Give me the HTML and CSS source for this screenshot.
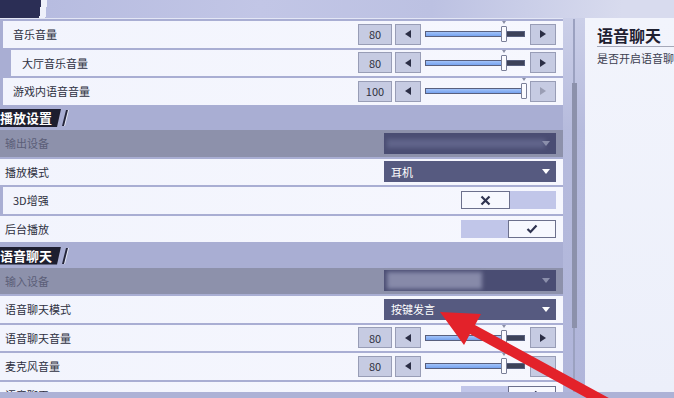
FILE: index.html
```html
<!DOCTYPE html>
<html lang="zh-CN">
<head>
    <meta charset="UTF-8">
    <title>声音设置</title>
    <link rel="stylesheet" href="styles.css">
</head>
<body>
    <div class="topbar"></div>
    <div class="main">
        <section class="settings">
            <div class="row in1">
                <span>音乐音量</span>
                <div class="slider">
                    <div class="num">80</div>
                    <span class="step prev"><i></i></span>
                    <div class="bar"><div class="fill" style="width:80%"></div><div class="knob" style="left:80%"></div></div>
                    <span class="step next"><i></i></span>
                </div>
            </div>
            <div class="row in2">
                <span>大厅音乐音量</span>
                <div class="slider">
                    <div class="num">80</div>
                    <span class="step prev"><i></i></span>
                    <div class="bar"><div class="fill" style="width:80%"></div><div class="knob" style="left:80%"></div></div>
                    <span class="step next"><i></i></span>
                </div>
            </div>
            <div class="row in1">
                <span>游戏内语音音量</span>
                <div class="slider">
                    <div class="num">100</div>
                    <span class="step prev"><i></i></span>
                    <div class="bar"><div class="fill" style="width:100%"></div><div class="knob" style="left:100%"></div></div>
                    <span class="step next dim"><i></i></span>
                </div>
            </div>

            <div class="head"><span class="tab">播放设置</span><span class="slash"></span></div>
            <div class="row off">
                <span>输出设备</span>
                <div class="select blur wide"><span class="mask"></span></div>
            </div>
            <div class="row">
                <span>播放模式</span>
                <div class="select">耳机</div>
            </div>
            <div class="row in1">
                <span>3D增强</span>
                <div class="toggle">
                    <span class="on"><svg width="11" height="11" viewBox="0 0 11 11"><path d="M1.5 1.5 L9.5 9.5 M9.5 1.5 L1.5 9.5" stroke="#2f3350" stroke-width="2.2"/></svg></span>
                    <span class="off"></span>
                </div>
            </div>
            <div class="row">
                <span>后台播放</span>
                <div class="toggle">
                    <span class="off"></span>
                    <span class="on"><svg width="12" height="10" viewBox="0 0 12 10"><path d="M1.5 5 L4.5 8 L10.5 1.5" stroke="#2f3350" stroke-width="2.2" fill="none"/></svg></span>
                </div>
            </div>

            <div class="head"><span class="tab">语音聊天</span><span class="slash"></span></div>
            <div class="row off">
                <span>输入设备</span>
                <div class="select blur"><span class="mask"></span></div>
            </div>
            <div class="row">
                <span>语音聊天模式</span>
                <div class="select">按键发言</div>
            </div>
            <div class="row">
                <span>语音聊天音量</span>
                <div class="slider">
                    <div class="num">80</div>
                    <span class="step prev"><i></i></span>
                    <div class="bar"><div class="fill" style="width:80%"></div><div class="knob" style="left:80%"></div></div>
                    <span class="step next"><i></i></span>
                </div>
            </div>
            <div class="row">
                <span>麦克风音量</span>
                <div class="slider">
                    <div class="num">80</div>
                    <span class="step prev"><i></i></span>
                    <div class="bar"><div class="fill" style="width:80%"></div><div class="knob" style="left:80%"></div></div>
                    <span class="step next"><i></i></span>
                </div>
            </div>
            <div class="row">
                <span>语音聊天</span>
                <div class="toggle">
                    <span class="off"></span>
                    <span class="on"><svg width="12" height="10" viewBox="0 0 12 10"><path d="M1.5 5 L4.5 8 L10.5 1.5" stroke="#2f3350" stroke-width="2.2" fill="none"/></svg></span>
                </div>
            </div>
        </section>

        <div class="gutter">
            <div class="track"><div class="thumb"></div></div>
        </div>

        <aside class="info">
            <h2>语音聊天</h2>
            <p>是否开启语音聊天</p>
        </aside>
    </div>
    <div class="bottombar"></div>

    <!-- 红色指示箭头 -->
    <svg class="pointer" width="674" height="398" viewBox="0 0 674 398">
        <polygon points="440,312 481,314 475,325 651,421 645,430 470,334 464,345" fill="#e3222a"/>
    </svg>
</body>
</html>
```

FILE: styles.css
```css
/* 基础 */
* {
    margin: 0;
    padding: 0;
    box-sizing: border-box;
}

body {
    width: 674px;
    height: 398px;
    overflow: hidden;
    position: relative;
    background: #aeb3d8;
    font-family: "Noto Sans CJK SC", "Noto Sans", sans-serif;
    color: #2e3040;
}

.topbar {
    height: 18px;
    background: linear-gradient(96deg, #2b2e55 0 41px, #eef0fa 41px 47px, #b7bce0 47px, #c2c6e6 260px, #bcc1e2 430px, #d8dbee 620px);
}

.main {
    display: flex;
    height: 374px;
}

.bottombar {
    height: 6px;
    background: #adb2d6;
}

/* 设置列表 */
.settings {
    width: 563px;
    background: #a9aed3;
    border-top: 1px solid #e3e6f5;
    padding-top: 2px;
    display: flex;
    flex-direction: column;
    gap: 2px;
    overflow: hidden;
}

.row {
    flex-shrink: 0;
    height: 26.5px;
    display: flex;
    align-items: center;
    justify-content: space-between;
    background: linear-gradient(90deg, #f2f4fd, #f6f7fe);
    padding: 0 7px 0 5px;
    font-size: 11px;
    white-space: nowrap;
}

.row.in1 {
    margin-left: 3px;
    padding-left: 10px;
}

.row.in2 {
    margin-left: 11px;
    padding-left: 11px;
}

.row.off {
    background: #8d91ab;
    color: #5b5e78;
}

/* 分组标题 */
.head {
    flex-shrink: 0;
    height: 21.5px;
    display: flex;
    align-items: flex-end;
    gap: 3px;
    padding-bottom: 1px;
}

.tab {
    height: 18px;
    line-height: 18px;
    padding-right: 9px;
    background: #1d1e2f;
    color: #fff;
    font-size: 13px;
    font-weight: bold;
    clip-path: polygon(0 0, 100% 0, calc(100% - 4px) 100%, 0 100%);
}

.slash {
    width: 2px;
    height: 16px;
    margin-bottom: 1px;
    background: #24253a;
    box-shadow: 1px 0 0 #e9ebf8;
    transform: skewX(-14deg);
}

/* 滑块 */
.slider {
    display: flex;
    align-items: center;
    height: 21px;
}

.num, .step {
    height: 21px;
    background: #c6cbe2;
    border: 1px solid #989db6;
    display: flex;
    align-items: center;
    justify-content: center;
}

.num {
    width: 34px;
    margin-right: 3px;
    font-size: 11px;
}

.step {
    width: 26px;
}

.step i {
    width: 0;
    height: 0;
    border-top: 4px solid transparent;
    border-bottom: 4px solid transparent;
}

.prev {
    margin-right: 4px;
}

.prev i {
    border-right: 6px solid #2b2e45;
}

.next {
    margin-left: 5px;
}

.next i {
    border-left: 6px solid #2b2e45;
}

.next.dim i {
    border-left-color: #9a9eb4;
}

.bar {
    position: relative;
    width: 100px;
    height: 6px;
    background: #3d4259;
    border: 1px solid #59607e;
}

.fill {
    height: 100%;
    background: linear-gradient(#a2c3f9, #76a2ee);
}

.knob {
    position: absolute;
    top: -6px;
    width: 6px;
    height: 16px;
    margin-left: -3px;
    background: #fbfbff;
    border: 1px solid #7a7f98;
    border-radius: 1px;
}

.knob::before {
    content: "";
    position: absolute;
    top: -6px;
    left: 0;
    border-left: 2px solid transparent;
    border-right: 2px solid transparent;
    border-top: 3px solid #8a8fa6;
}

/* 下拉框 */
.select {
    position: relative;
    width: 172px;
    height: 21px;
    display: flex;
    align-items: center;
    padding-left: 7px;
    background: #565a80;
    color: #fff;
    font-size: 11px;
}

.select::after {
    content: "";
    position: absolute;
    right: 6px;
    top: 8px;
    border-left: 4px solid transparent;
    border-right: 4px solid transparent;
    border-top: 5px solid #fff;
}

.select.blur {
    background: #4a4d73;
    padding-left: 3px;
}

.select.blur::after {
    border-top-color: #8b8fab;
}

.mask {
    width: 95px;
    height: 17px;
    background: #878aa9;
    filter: blur(2px);
}

.wide .mask {
    width: 158px;
    height: 9px;
    background: #60648a;
}

/* 开关 */
.toggle {
    display: flex;
    width: 95px;
    height: 18px;
}

.toggle span {
    flex: 1;
    display: flex;
    align-items: center;
    justify-content: center;
}

.toggle .on {
    background: #f7f8fe;
    border: 1px solid #6c708c;
}

.toggle .off {
    background: #c1c6e9;
}

/* 滚动条 */
.gutter {
    position: relative;
    width: 22px;
    background: linear-gradient(#cbcfe8, #b6bbdd 30%, #b0b5da);
}

.track {
    position: absolute;
    left: 10px;
    top: 1px;
    bottom: 0;
    width: 2px;
    background: #9ba1c0;
}

.thumb {
    position: absolute;
    left: -1px;
    top: 64px;
    width: 5px;
    height: 245px;
    background: #8c91ab;
}

/* 说明面板 */
.info {
    flex: 1;
    padding: 7px 0 0 12px;
    background: linear-gradient(#f2f4fc, #eceffa);
    overflow: hidden;
    white-space: nowrap;
}

.info h2 {
    font-size: 16px;
    line-height: 20px;
    font-weight: bold;
    color: #1e2030;
    padding-bottom: 1px;
    border-bottom: 1px solid #a5a8b8;
}

.info p {
    margin-top: 4px;
    font-size: 11px;
    line-height: 14px;
    color: #3d3f50;
}

.pointer {
    position: absolute;
    left: 0;
    top: 0;
    pointer-events: none;
}
```
